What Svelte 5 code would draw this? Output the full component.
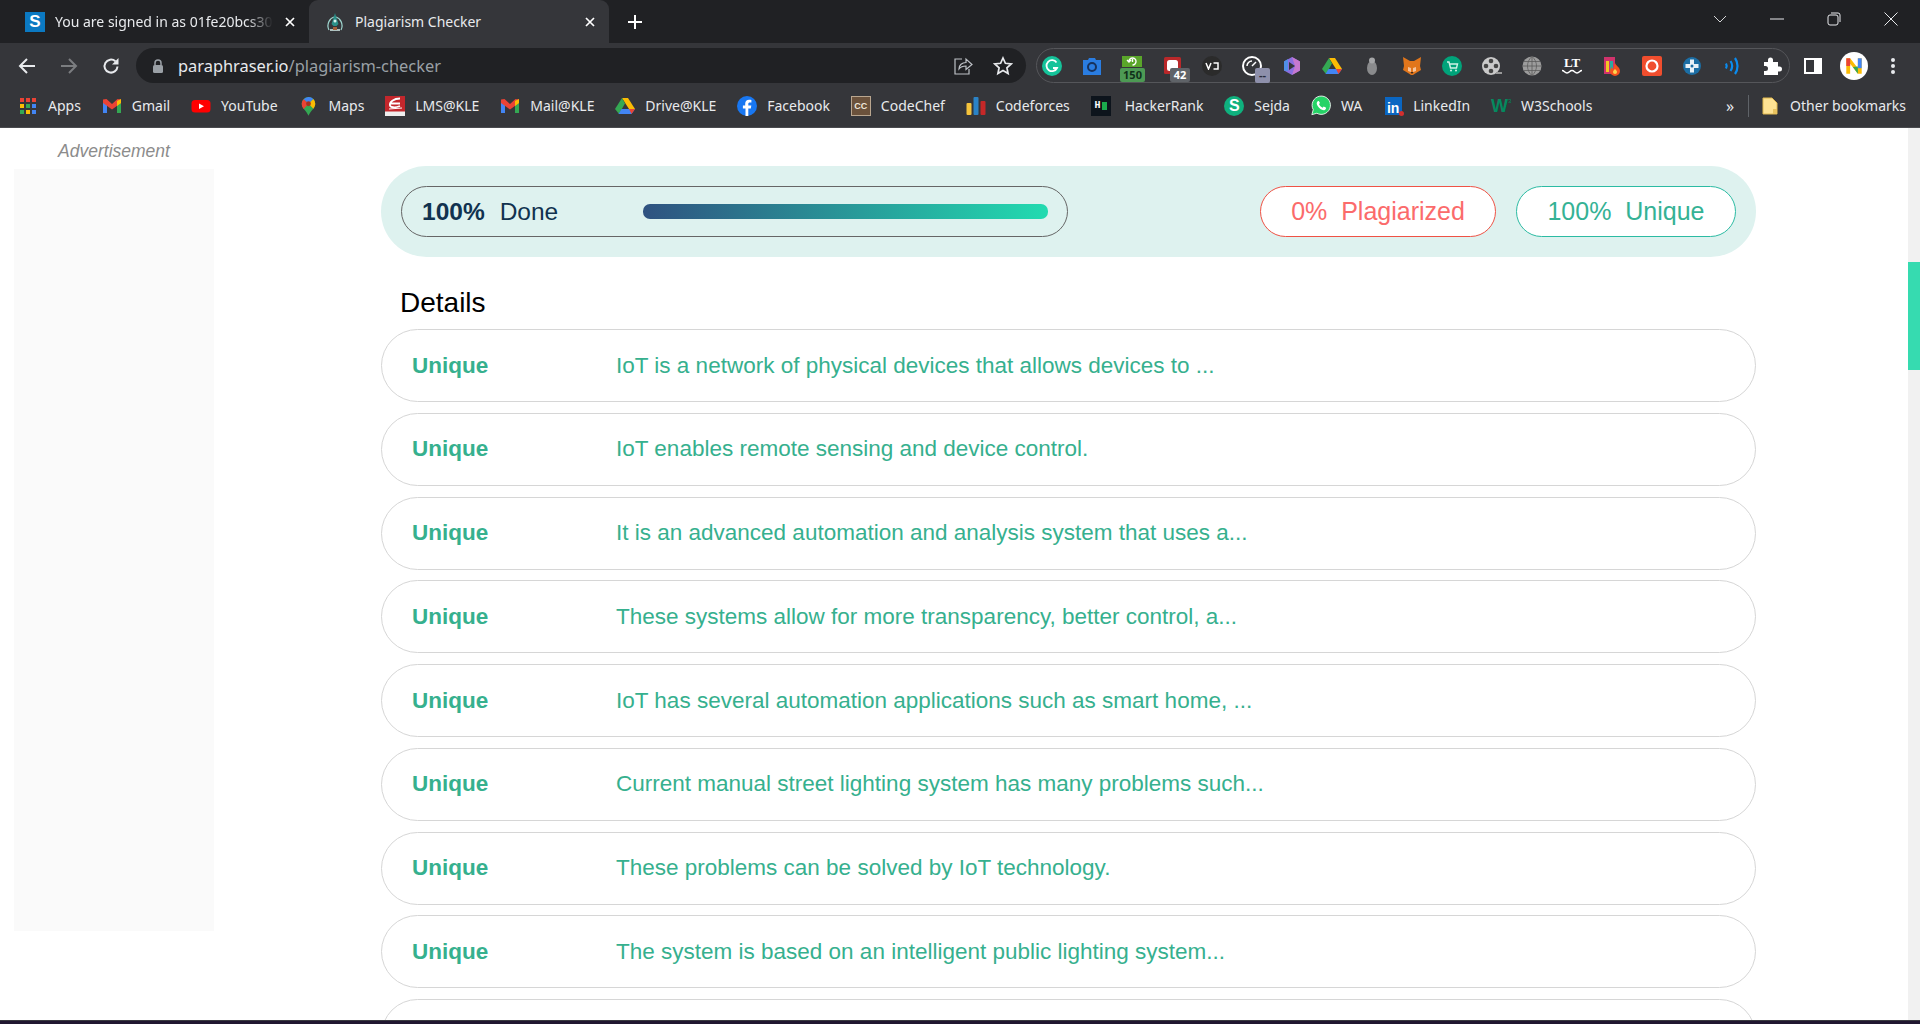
<script>
  const bookmarks = [
    { id: "apps", label: "Apps" },
    { id: "gmail", label: "Gmail" },
    { id: "youtube", label: "YouTube" },
    { id: "maps", label: "Maps" },
    { id: "lms", label: "LMS@KLE" },
    { id: "gmail", label: "Mail@KLE" },
    { id: "drive", label: "Drive@KLE" },
    { id: "facebook", label: "Facebook" },
    { id: "codechef", label: "CodeChef" },
    { id: "codeforces", label: "Codeforces" },
    { id: "hackerrank", label: "HackerRank" },
    { id: "sejda", label: "Sejda" },
    { id: "whatsapp", label: "WA" },
    { id: "linkedin", label: "LinkedIn" },
    { id: "w3", label: "W3Schools" }
  ];

  const sentences = [
    "IoT is a network of physical devices that allows devices to ...",
    "IoT enables remote sensing and device control.",
    "It is an advanced automation and analysis system that uses a...",
    "These systems allow for more transparency, better control, a...",
    "IoT has several automation applications such as smart home, ...",
    "Current manual street lighting system has many problems such...",
    "These problems can be solved by IoT technology.",
    "The system is based on an intelligent public lighting system...",
    ""
  ];
</script>

{#snippet mark(id)}
  {#if id === "apps"}
    <svg viewBox="0 0 20 20" width="20" height="20">
      <rect x="2" y="2" width="4" height="4" fill="#ea4335"/><rect x="8" y="2" width="4" height="4" fill="#ea4335"/><rect x="14" y="2" width="4" height="4" fill="#ea4335"/>
      <rect x="2" y="8" width="4" height="4" fill="#fbbc04"/><rect x="8" y="8" width="4" height="4" fill="#34a853"/><rect x="14" y="8" width="4" height="4" fill="#4285f4"/>
      <rect x="2" y="14" width="4" height="4" fill="#34a853"/><rect x="8" y="14" width="4" height="4" fill="#fbbc04"/><rect x="14" y="14" width="4" height="4" fill="#4285f4"/>
    </svg>
  {:else if id === "gmail"}
    <svg viewBox="0 0 20 20" width="20" height="20">
      <path d="M1 5v12h4V9z" fill="#4285f4"/><path d="M15 9v8h4V5z" fill="#34a853"/>
      <path d="M1 3.500V7l9 6.500 9-6.500V3.500L15.500 3 10 8 4.500 3z" fill="#ea4335"/><path d="M15 5l4-2v4l-4 3z" fill="#fbbc04"/>
    </svg>
  {:else if id === "youtube"}
    <svg viewBox="0 0 20 20" width="20" height="20">
      <rect x="0.500" y="4" width="19" height="12.500" rx="3.500" fill="#f00"/><path d="M8 7.500l5 2.700-5 2.700z" fill="#fff"/>
    </svg>
  {:else if id === "maps"}
    <svg viewBox="0 0 20 26" width="15" height="20">
      <path d="M10 1a9 9 0 0 0-9 9c0 6 6 9 9 16 3-7 9-10 9-16a9 9 0 0 0-9-9z" fill="#34a853"/>
      <path d="M3.500 4a9 9 0 0 1 13-.5L10 10z" fill="#4285f4"/><path d="M1 10c0-2.500.9-4.500 2.500-6l6.500 6-6.500 7C2 15 1 13 1 10z" fill="#ea4335"/>
      <path d="M16.500 3.500A9 9 0 0 1 19 10c0 2.500-1 4.500-2.500 6.500L10 10z" fill="#fbbc04"/><circle cx="10" cy="10" r="3.200" fill="#a5321f"/>
    </svg>
  {:else if id === "lms"}
    <svg viewBox="0 0 20 20" width="20" height="20">
      <rect width="20" height="20" fill="#c3272c"/><rect y="15.500" width="20" height="4.500" fill="#eee"/>
      <path d="M15 2.500C9 2.500 4 6 5 9.500c.5 2 5 2.500 10 .5M6 7.500h9" fill="none" stroke="#fff" stroke-width="1.800"/>
      <path d="M4 13L17 12" stroke="#fff" stroke-width="1"/>
    </svg>
  {:else if id === "drive"}
    <svg viewBox="0 0 20 18" width="20" height="18">
      <path d="M7 1h6l7 11h-6z" fill="#fbbc04"/><path d="M7 1l3 5.500L4 17 0 12z" fill="#34a853"/><path d="M6.500 12H20l-3.500 5H3.500z" fill="#4285f4"/><path d="M14 12h6l-3.500 5z" fill="#ea4335"/>
    </svg>
  {:else if id === "facebook"}
    <svg viewBox="0 0 20 20" width="20" height="20">
      <circle cx="10" cy="10" r="10" fill="#1877f2"/>
      <path d="M11.300 20v-7.500h2.500l.5-3h-3V8c0-1 .4-1.500 1.600-1.500h1.500V4c-.6-.1-1.500-.2-2.300-.2-2.400 0-3.900 1.400-3.900 3.900v1.800H5.900v3h2.600V20z" fill="#fff"/>
    </svg>
  {:else if id === "codechef"}
    <span class="cc">CC</span>
  {:else if id === "codeforces"}
    <svg viewBox="0 0 20 20" width="20" height="20">
      <rect x="0.500" y="7" width="5" height="12" rx="1" fill="#f5c33b"/><rect x="7.500" y="1" width="5" height="18" rx="1" fill="#2b83c6"/><rect x="14.500" y="5" width="5" height="14" rx="1" fill="#c62828"/>
    </svg>
  {:else if id === "hackerrank"}
    <span class="hr"><b>H</b><i></i></span>
  {:else if id === "sejda"}
    <span class="sejda">S</span>
  {:else if id === "whatsapp"}
    <svg viewBox="0 0 24 24" width="21" height="21">
      <path d="M1 23l1.700-6A11 11 0 1 1 7 21.300z" fill="#25d366" stroke="#fff" stroke-width="1"/>
      <path d="M8.500 6.500c-1 .5-2 2-1.500 4 .8 3 4 6 7 7 2 .5 3.500-.5 4-2l-.2-1-2.600-1.300-1.200 1.400c-2-.8-3.600-2.400-4.400-4.400l1.200-1.200L9.300 6.500z" fill="#fff"/>
    </svg>
  {:else if id === "linkedin"}
    <span class="li">in<i></i></span>
  {:else if id === "w3"}
    <span class="w3">W<sup>3</sup></span>
  {/if}
{/snippet}

<div class="browser">
  <header class="tabstrip">
    <div class="tab">
      <span class="fav-s">S</span>
      <span class="tab-title fade">You are signed in as 01fe20bcs30</span>
      <svg class="tab-x" viewBox="0 0 10 10" width="10" height="10"><path d="M1 1l8 8M9 1l-8 8" stroke="#fff" stroke-width="1.700"/></svg>
    </div>
    <div class="tab active">
      <svg class="fav-p" viewBox="0 0 20 20" width="20" height="20">
        <path d="M4 18C1 12 5 6 9 5M16 18c3-6-1-12-5-13" fill="none" stroke="#9fd6cf" stroke-width="1.200"/>
        <path d="M10 1l1.500 5 2 6-2 2h-3l-2-2 2-6z" fill="#2b8f88"/><circle cx="10" cy="9" r="1.500" fill="#d9f2ee"/>
        <path d="M5 18h10" stroke="#d9f2ee" stroke-width="1.500"/><path d="M8 15h4v3H8z" fill="#a3603b"/>
      </svg>
      <span class="tab-title">Plagiarism Checker</span>
      <svg class="tab-x" viewBox="0 0 10 10" width="10" height="10"><path d="M1 1l8 8M9 1l-8 8" stroke="#fff" stroke-width="1.700"/></svg>
    </div>
    <svg class="new-tab" viewBox="0 0 16 16" width="16" height="16"><path d="M8 1v14M1 8h14" stroke="#fff" stroke-width="2"/></svg>
    <div class="window-btns">
      <span class="win"><svg viewBox="0 0 14 8" width="14" height="8"><path d="M1 1l6 6 6-6" fill="none" stroke="#d5d6d8" stroke-width="1"/></svg></span>
      <span class="win"><svg viewBox="0 0 14 2" width="14" height="2"><path d="M0 1h14" stroke="#e8eaed" stroke-width="1"/></svg></span>
      <span class="win"><svg viewBox="0 0 14 14" width="14" height="14"><rect x="1" y="3" width="10" height="10" rx="2" fill="none" stroke="#e8eaed"/><path d="M4 1h7a2 2 0 0 1 2 2v7" fill="none" stroke="#e8eaed"/></svg></span>
      <span class="win"><svg viewBox="0 0 14 14" width="14" height="14"><path d="M.5.500l13 13M13.500.500l-13 13" stroke="#e8eaed" stroke-width="1"/></svg></span>
    </div>
  </header>

  <div class="toolbar">
    <button class="nav" aria-label="Back"><svg viewBox="0 0 18 18" width="18" height="18"><path d="M17 9H2M9 2L2 9l7 7" fill="none" stroke="#e8eaed" stroke-width="2"/></svg></button>
    <button class="nav" aria-label="Forward"><svg viewBox="0 0 18 18" width="18" height="18"><path d="M1 9h15M9 2l7 7-7 7" fill="none" stroke="#7b7d80" stroke-width="2"/></svg></button>
    <button class="nav" aria-label="Reload"><svg viewBox="0 0 18 18" width="18" height="18"><path d="M15.500 9.500A6.500 6.500 0 1 1 13.400 4.300" fill="none" stroke="#e8eaed" stroke-width="2"/><path d="M16.500 1v6.500H10z" fill="#e8eaed"/></svg></button>

    <div class="omnibox">
      <svg viewBox="0 0 12 14" width="12" height="14"><path d="M3 6V4a3 3 0 0 1 6 0v2" fill="none" stroke="#9aa0a6" stroke-width="1.500"/><rect x="1" y="6" width="10" height="8" rx="1.500" fill="#9aa0a6"/></svg>
      <span class="url">paraphraser.io<em>/plagiarism-checker</em></span>
      <svg class="share" viewBox="0 0 20 20" width="20" height="20"><path d="M9 3H2v15h14v-5" fill="none" stroke="#bdc1c6" stroke-width="1.200"/><path d="M6 13c0-4 3-6.500 7-6.500V3l6 5.500-6 5V10c-3 0-5.500 1-7 3z" fill="none" stroke="#bdc1c6" stroke-width="1.200"/></svg>
      <svg class="star" viewBox="0 0 20 20" width="20" height="20"><path d="M10 2l2.400 5.300 5.800.6-4.300 3.900 1.200 5.700L10 14.600l-5.100 2.900 1.200-5.700L1.800 7.900l5.800-.6z" fill="none" stroke="#e8eaed" stroke-width="1.700"/></svg>
    </div>

    <div class="extensions">
      <span class="ext"><svg viewBox="0 0 20 20" width="20" height="20"><circle cx="10" cy="10" r="10" fill="#15c39a"/><path d="M14.500 6.500A5.500 5.500 0 1 0 15 12h-4" fill="none" stroke="#fff" stroke-width="1.800"/></svg></span>
      <span class="ext"><svg viewBox="0 0 20 20" width="20" height="20"><path d="M1 4h5l1-2h6l1 2h5v15H1z" fill="#2a7de1"/><circle cx="10" cy="11" r="4" fill="none" stroke="#17335e" stroke-width="2"/></svg></span>
      <span class="ext"><svg class="lift" viewBox="0 0 20 11" width="20" height="11"><rect width="20" height="11" fill="#5aa62a"/><path d="M7 5.500a3.500 3.500 0 1 1 3.500 3.500M10.500 3v3M5 4l2 2 2-2" fill="none" stroke="#fff" stroke-width="1.400"/></svg><span class="badge green">150</span></span>
      <span class="ext"><svg viewBox="0 0 17 17" width="17" height="17"><rect width="17" height="17" rx="1.500" fill="#b9282a"/><rect x="3" y="3" width="11" height="11" rx="2.500" fill="#fff"/></svg><span class="badge gray">42</span></span>
      <span class="ext"><span class="vd"><svg viewBox="0 0 14 8" width="14" height="8"><path d="M1 1l2.500 6L6 1M8.500 1H13v6H8.500" fill="none" stroke="#fff" stroke-width="1.500"/></svg></span></span>
      <span class="ext"><svg viewBox="0 0 20 20" width="20" height="20"><circle cx="10" cy="10" r="9" fill="none" stroke="#fff" stroke-width="2"/><path d="M5 10a5 5 0 0 1 5-5M10 10l4-4" fill="none" stroke="#fff" stroke-width="1.500"/></svg><span class="badge slate">--</span></span>
      <span class="ext"><svg viewBox="0 0 20 20" width="20" height="20"><path d="M10 1l8 4.500v9L10 19l-8-4.500v-9z" fill="#8a6fe0"/><path d="M10 1l8 4.500v9L10 19l3-9z" fill="#c678d0"/><path d="M2 5.500L6 3v12l-4-.5z" fill="#4f8fe6"/><path d="M7 6l6 4-6 4z" fill="#35363a"/></svg></span>
      <span class="ext">{@render mark("drive")}</span>
      <span class="ext"><svg viewBox="0 0 20 20" width="20" height="20"><ellipse cx="10" cy="12" rx="5" ry="7" fill="#8a8b8d"/><circle cx="10" cy="4.500" r="3" fill="#a5a6a8"/></svg></span>
      <span class="ext"><svg viewBox="0 0 20 20" width="20" height="20"><path d="M1 1l7 4h4l7-4-1 9 1 4-5 3-3 2h-2l-3-2-5-3 1-4z" fill="#e2761b"/><path d="M6 11l3 1v4l-3-1zM14 11l-3 1v4l3-1z" fill="#f6c39b"/><path d="M8.500 16h3l-1.500 2z" fill="#3a2a1e"/></svg></span>
      <span class="ext"><svg viewBox="0 0 20 20" width="20" height="20"><circle cx="10" cy="10" r="10" fill="#00a37a"/><path d="M5 6h2l1.500 6h6l1-4H8" fill="none" stroke="#cdf2e6" stroke-width="1.400"/><circle cx="9" cy="14.500" r="1" fill="#cdf2e6"/><circle cx="14" cy="14.500" r="1" fill="#cdf2e6"/></svg></span>
      <span class="ext"><svg viewBox="0 0 20 20" width="20" height="20"><circle cx="9" cy="10" r="9" fill="#c9c9c9"/><circle cx="9" cy="5" r="2.300" fill="#444"/><circle cx="9" cy="15" r="2.300" fill="#444"/><circle cx="4" cy="10" r="2.300" fill="#444"/><circle cx="14" cy="10" r="2.300" fill="#444"/><path d="M14 17h6" stroke="#999" stroke-width="2"/></svg></span>
      <span class="ext"><svg viewBox="0 0 20 20" width="20" height="20"><circle cx="10" cy="10" r="9.500" fill="#9c9c9c"/><path d="M.5 10h19M2 5.500h16M2 14.500h16M10 .5v19M10 .5c-6 5-6 14 0 19M10 .5c6 5 6 14 0 19" fill="none" stroke="#5c5c5c" stroke-width=".8"/></svg></span>
      <span class="ext lt"><span>LT</span><svg viewBox="0 0 20 5" width="20" height="5"><path d="M0 1.500c2.500 0 2.500 2.500 5 2.500s2.500-2.500 5-2.500 2.500 2.500 5 2.500 2.500-2.500 5-2.500" fill="none" stroke="#fff" stroke-width="1.500"/></svg></span>
      <span class="ext"><svg viewBox="0 0 20 20" width="20" height="20"><rect x="2" y="1" width="11" height="17" fill="#d0336c"/><rect x="4" y="5" width="3" height="11" fill="#f3c623"/><rect x="8" y="5" width="3" height="11" fill="#2ba9a0"/><path d="M13 7c1 3 5 4 5 8a5 5 0 0 1-10 0c0-2 1-3 2-4 0 2 1 2 1.500 2C12 11 12 9 13 7z" fill="#f4511e"/><path d="M13 13c1 1 2 2 2 3a2 2 0 0 1-4 0c0-1 1-2 2-3z" fill="#ffd54f"/></svg></span>
      <span class="ext"><svg viewBox="0 0 20 20" width="20" height="20"><rect width="20" height="20" rx="2" fill="#f04e2e"/><circle cx="10" cy="10" r="5.500" fill="none" stroke="#fff" stroke-width="2.200"/></svg></span>
      <span class="ext"><svg viewBox="0 0 20 20" width="20" height="20"><circle cx="10" cy="10" r="9" fill="#1c6ea4"/><path d="M8 3.500h4V8h4.500v4H12v4.500H8V12H3.500V8H8z" fill="#e8f1f7"/><circle cx="10" cy="10" r="1.500" fill="#1c6ea4"/></svg></span>
      <span class="ext"><svg viewBox="0 0 20 20" width="20" height="20"><path d="M4 7.500a5 5 0 0 1 0 5M8.500 5a9 9 0 0 1 0 10M13 2a14 14 0 0 1 0 16" fill="none" stroke="#0a8cf0" stroke-width="2.200"/></svg></span>
      <span class="ext"><svg viewBox="0 0 20 20" width="20" height="20"><path d="M2 6h4V4a2.500 2.500 0 0 1 5 0v2h5v4.500h1.500a2.500 2.500 0 0 1 0 5H16V19H2v-4h1.500a2.500 2.500 0 0 0 0-5H2z" fill="#fff"/></svg></span>
    </div>

    <span class="tool"><svg viewBox="0 0 18 16" width="18" height="16"><path d="M0 0h18v16H0zM2 2v12h8V2z" fill="#fff" fill-rule="evenodd"/></svg></span>
    <span class="avatar">
      <svg viewBox="0 0 20 20" width="22" height="22"><path d="M3 17V3h3.500l7 9V3H17v14h-3.500l-7-9v9z" fill="#fbbc04"/><path d="M13.500 3H17v9h-3.500z" fill="#4285f4"/><path d="M3 3h3.500v7H3z" fill="#ea4335"/><path d="M9 11l4.500-.5V17H17l-3.500 0z" fill="#34a853"/></svg>
    </span>
    <span class="tool kebab"><i></i><i></i><i></i></span>
  </div>

  <nav class="bookmarks">
    {#each bookmarks as b}
      <span class="bm" class:wide={b.id === "hackerrank"}>
        <span class="bm-icon">{@render mark(b.id)}</span>
        {b.label}
      </span>
    {/each}
    <span class="bm-end">
      <span class="chevrons">»</span>
      <span class="bm-sep"></span>
      <span class="bm folder">
        <svg viewBox="0 0 16 18" width="16" height="18"><path d="M1 1h9l5 5v11H1z" fill="#fde293" stroke="#e0b84f"/><path d="M11 12h4v5h-4z" fill="#e8c25e"/></svg>
        Other bookmarks
      </span>
    </span>
  </nav>

  <div class="page">
    <aside class="ad-col">
      <p class="ad-label">Advertisement</p>
      <div class="ad-box"></div>
    </aside>

    <main class="results">
      <section class="summary">
        <div class="progress">
          <strong>100%</strong>
          <span class="done">Done</span>
          <div class="bar"></div>
        </div>
        <div class="pill plag">0%&nbsp; Plagiarized</div>
        <div class="pill uniq">100%&nbsp; Unique</div>
      </section>

      <h2>Details</h2>

      <div class="rows">
        {#each sentences as s}
          <div class="row">
            {#if s}
              <b>Unique</b>
              <span>{s}</span>
            {/if}
          </div>
        {/each}
      </div>
    </main>

    <div class="scrollbar"><div class="thumb"></div></div>
  </div>

  <div class="taskbar"></div>
</div>

<style>
  :global(body) {
    margin: 0;
    background: #fff;
    overflow: hidden;
  }

  .browser {
    display: flex;
    flex-direction: column;
    height: 1024px;
    font-family: "Noto Sans", "Open Sans", sans-serif;
  }

  .tabstrip {
    display: flex;
    align-items: flex-end;
    height: 43px;
    background: #202124;
    padding-left: 9px;
    box-sizing: border-box;
  }

  .tab {
    display: flex;
    align-items: center;
    height: 43px;
    width: 300px;
    box-sizing: border-box;
    padding: 0 14px 0 16px;
    color: #e8eaed;
    font-size: 14px;
  }

  .tab.active {
    background: #35363a;
    border-radius: 9px 9px 0 0;
    color: #e8eaed;
    padding-left: 16px;
  }

  .fav-s {
    width: 20px;
    height: 20px;
    flex: none;
    background: #0b79c2;
    color: #fff;
    font: bold 17px/20px "Liberation Sans", sans-serif;
    text-align: center;
  }

  .fav-p {
    flex: none;
  }

  .tab-title {
    flex: 1;
    margin-left: 10px;
    white-space: nowrap;
    overflow: hidden;
  }

  .tab-title.fade {
    -webkit-mask-image: linear-gradient(90deg, #000 88%, transparent);
    mask-image: linear-gradient(90deg, #000 88%, transparent);
    margin-right: 12px;
  }

  .tab-x {
    flex: none;
  }

  .new-tab {
    margin: 0 0 13px 18px;
  }

  .window-btns {
    display: flex;
    margin-left: auto;
    align-self: stretch;
    margin-right: 1px;
  }

  .win {
    width: 57px;
    display: flex;
    align-items: center;
    justify-content: center;
    height: 38px;
  }

  .toolbar {
    display: flex;
    align-items: center;
    height: 41px;
    background: #35363a;
    padding: 5px 0 1px 7px;
    box-sizing: border-box;
  }

  .nav {
    width: 40px;
    height: 35px;
    padding: 0;
    border: 0;
    background: none;
    display: flex;
    align-items: center;
    justify-content: center;
    margin-right: 2px;
  }

  .omnibox {
    display: flex;
    align-items: center;
    width: 890px;
    height: 35px;
    margin-left: 3px;
    box-sizing: border-box;
    padding: 0 13px 0 16px;
    background: #202124;
    border-radius: 18px;
  }

  .url {
    margin-left: 14px;
    color: #e8eaed;
    font-size: 16.400px;
  }

  .url em {
    font-style: normal;
    color: #9aa0a6;
  }

  .share {
    margin-left: auto;
    margin-right: 20px;
  }

  .extensions {
    display: flex;
    align-items: center;
    height: 35px;
    width: 754px;
    margin-left: 10px;
    box-sizing: border-box;
    border: 1px solid #55565a;
    border-radius: 18px;
  }

  .ext {
    position: relative;
    flex: none;
    width: 40px;
    height: 33px;
    display: flex;
    flex-direction: column;
    align-items: center;
    justify-content: center;
  }

  .ext:first-child {
    margin-left: -5px;
  }

  .lift {
    margin-top: -8px;
  }

  .badge {
    position: absolute;
    top: 19px;
    height: 14px;
    font: bold 11px/14px "Noto Sans", sans-serif;
    border-radius: 2px;
    color: #fff;
    text-align: center;
  }

  .badge.green {
    background: #4d9a54;
    color: #10301a;
    left: 8px;
    width: 25px;
  }

  .badge.gray {
    background: #5f6368;
    left: 18px;
    width: 20px;
  }

  .badge.slate {
    background: #8e90ab;
    color: #2a2c3c;
    left: 23px;
    width: 15px;
    height: 15px;
  }

  .vd {
    width: 20px;
    height: 20px;
    border-radius: 50%;
    background: #2b2b2b;
    display: flex;
    align-items: center;
    justify-content: center;
  }

  .lt {
    color: #fff;
    font: bold 13px/11px "Liberation Serif", serif;
    gap: 1px;
  }

  .tool {
    width: 18px;
    display: flex;
    margin-left: 14px;
  }

  .avatar {
    width: 28px;
    height: 28px;
    margin-left: 18px;
    border-radius: 50%;
    background: #fff;
    display: flex;
    align-items: center;
    justify-content: center;
  }

  .kebab {
    flex-direction: column;
    align-items: center;
    gap: 2px;
    margin-left: 16px;
  }

  .kebab i {
    width: 4px;
    height: 4px;
    border-radius: 50%;
    background: #e8eaed;
  }

  .bookmarks {
    display: flex;
    align-items: center;
    height: 44px;
    background: #35363a;
    border-bottom: 1px solid #4a4b4f;
    box-sizing: border-box;
    padding-left: 18px;
    color: #e8eaed;
    font-size: 14px;
    white-space: nowrap;
    gap: 20.900px;
  }

  .bm {
    display: flex;
    align-items: center;
    gap: 10px;
  }

  .bm.wide {
    gap: 14px;
  }

  .bm.folder {
    gap: 12px;
  }

  .bm-icon {
    width: 20px;
    height: 24px;
    display: flex;
    align-items: center;
    justify-content: center;
    flex: none;
  }

  .bm-end {
    display: flex;
    align-items: center;
    margin-left: auto;
    margin-right: 14px;
  }

  .chevrons {
    font-size: 16px;
    margin-right: 14px;
  }

  .bm-sep {
    width: 1px;
    height: 22px;
    background: #5f6368;
    margin-right: 13px;
  }

  .cc {
    width: 20px;
    height: 20px;
    background: #6b523c;
    border: 1px solid #b9a68f;
    box-sizing: border-box;
    color: #efe7db;
    font: bold 9px/18px "Liberation Sans", sans-serif;
    text-align: center;
  }

  .hr {
    width: 20px;
    height: 20px;
    background: #0d141c;
    display: flex;
    align-items: center;
    justify-content: center;
    gap: 1px;
  }

  .hr b {
    color: #fff;
    font: bold 10px/10px "Liberation Mono", monospace;
  }

  .hr i {
    width: 5px;
    height: 8px;
    background: #1ba94c;
  }

  .sejda {
    width: 20px;
    height: 20px;
    border-radius: 50%;
    background: #0fb17e;
    color: #fff;
    font: bold 16px/20px "Liberation Sans", sans-serif;
    text-align: center;
  }

  .li {
    position: relative;
    width: 17px;
    height: 18px;
    background: #0a66c2;
    color: #fff;
    font: bold 14px/22px "Liberation Sans", sans-serif;
    text-align: center;
  }

  .li i {
    position: absolute;
    right: -2px;
    bottom: -1px;
    width: 5px;
    height: 5px;
    border-radius: 50%;
    background: #d32f2f;
  }

  .w3 {
    color: #04895f;
    font: bold 18px/20px "Liberation Sans", sans-serif;
  }

  .w3 sup {
    font-size: 6px;
    font-weight: normal;
    vertical-align: 9px;
    line-height: 0;
  }

  /* page body */
  .page {
    flex: 1;
    min-height: 0;
    display: flex;
    overflow: hidden;
    background: #fff;
    font-family: "Liberation Sans", Arial, sans-serif;
  }

  .ad-col {
    flex: none;
    width: 200px;
    margin-left: 14px;
    padding-top: 14px;
  }

  .ad-label {
    margin: 0 0 9px;
    height: 18px;
    font-size: 17.500px;
    line-height: 18px;
    font-style: italic;
    color: #8c8c8c;
    text-align: center;
  }

  .ad-box {
    height: 762px;
    background: #fafafa;
  }

  .results {
    flex: none;
    width: 1375px;
    margin-left: 167px;
    padding-top: 38px;
  }

  .summary {
    display: flex;
    align-items: center;
    height: 91px;
    padding: 0 20px;
    box-sizing: border-box;
    background: #def2ef;
    border-radius: 46px;
  }

  .progress {
    display: flex;
    align-items: center;
    width: 667px;
    height: 51px;
    box-sizing: border-box;
    padding: 0 19px 0 20px;
    margin-right: auto;
    border: 1px solid #666;
    border-radius: 26px;
    color: #11324f;
    font-size: 24.500px;
  }

  .done {
    margin-left: 15px;
  }

  .bar {
    height: 15px;
    width: 405px;
    margin-left: auto;
    border-radius: 7px;
    background: linear-gradient(90deg, #2f5280, #22dbb0);
  }

  .pill {
    height: 51px;
    box-sizing: border-box;
    border-radius: 26px;
    background: #fff;
    font-size: 25px;
    line-height: 49px;
    text-align: center;
    white-space: nowrap;
  }

  .plag {
    width: 236px;
    border: 1px solid #ef5245;
    color: #fb6b6b;
  }

  .uniq {
    width: 220px;
    margin-left: 20px;
    border: 1px solid #2cbba3;
    color: #35b295;
  }

  h2 {
    margin: 0;
    padding: 30px 0 0 19px;
    height: 42px;
    box-sizing: content-box;
    font-size: 28px;
    line-height: 31px;
    font-weight: normal;
    color: #000;
  }

  .rows {
    display: flex;
    flex-direction: column;
    gap: 10.750px;
  }

  .row {
    display: flex;
    align-items: center;
    flex: none;
    height: 73px;
    box-sizing: border-box;
    padding-left: 30px;
    border: 1px solid #d6d6d6;
    border-radius: 37px;
    color: #36b08e;
    font-size: 22.500px;
  }

  .row b {
    flex: none;
    width: 204px;
  }

  .scrollbar {
    flex: none;
    width: 12px;
    margin-left: auto;
    background: #f1f1f1;
  }

  .thumb {
    height: 108px;
    margin-top: 134px;
    background: #36dbb0;
  }

  .taskbar {
    flex: none;
    height: 4px;
    background: #201630;
    border-top: 1px solid #3a3a40;
    box-sizing: border-box;
  }
</style>
